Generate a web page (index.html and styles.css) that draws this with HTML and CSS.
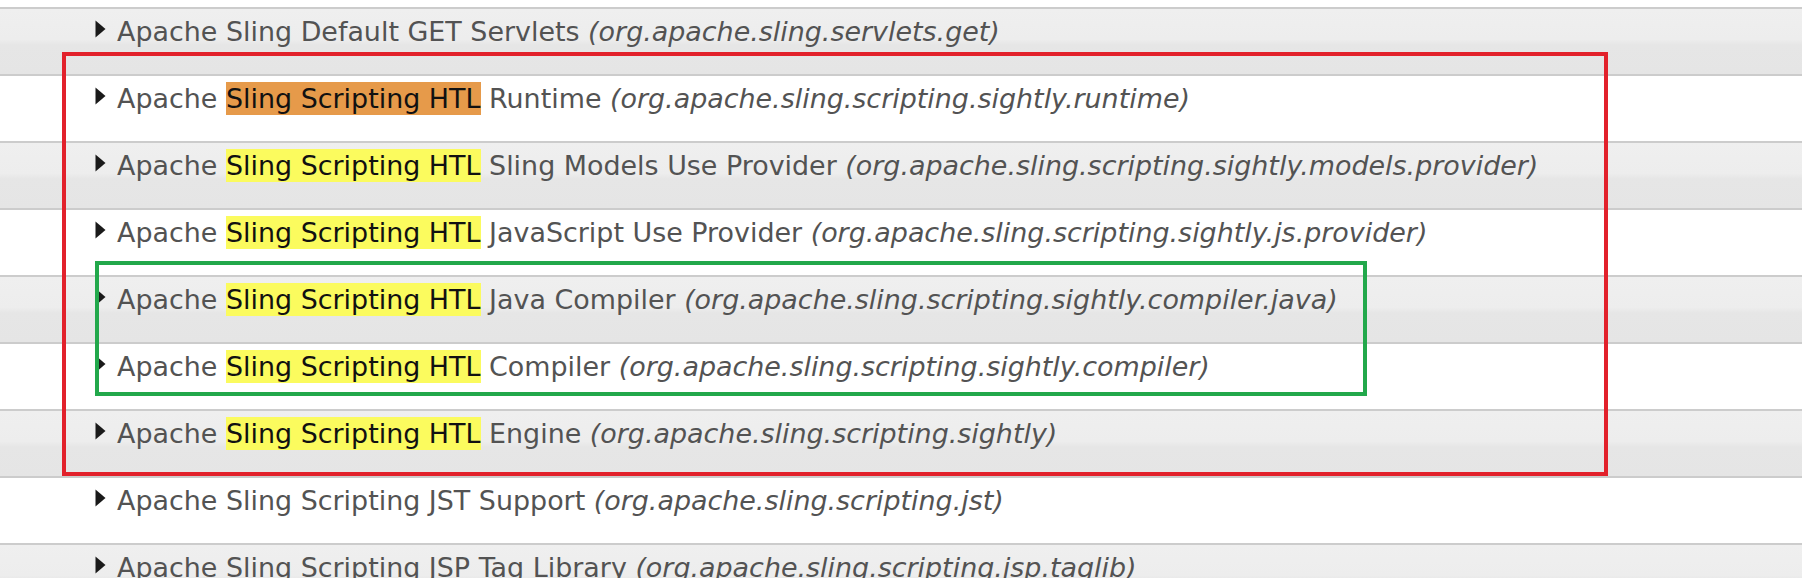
FILE: index.html
```html
<!DOCTYPE html>
<html>
<head>
<meta charset="utf-8">
<link rel="stylesheet" href="styles.css">
</head>
<body>
<div class="page">
  <div class="list">
    <div class="row grey"><svg class="tri" viewBox="0 0 11 18"><path d="M0.5 0.5 L10.5 9 L0.5 17.5 Z"/></svg><span class="name">Apache Sling Default GET Servlets <i>(org.apache.sling.servlets.get)</i></span></div>
    <div class="row"><svg class="tri" viewBox="0 0 11 18"><path d="M0.5 0.5 L10.5 9 L0.5 17.5 Z"/></svg><span class="name">Apache <mark class="hl hl-current">Sling Scripting HTL</mark> Runtime <i>(org.apache.sling.scripting.sightly.runtime)</i></span></div>
    <div class="row grey"><svg class="tri" viewBox="0 0 11 18"><path d="M0.5 0.5 L10.5 9 L0.5 17.5 Z"/></svg><span class="name">Apache <mark class="hl">Sling Scripting HTL</mark> Sling Models Use Provider <i>(org.apache.sling.scripting.sightly.models.provider)</i></span></div>
    <div class="row"><svg class="tri" viewBox="0 0 11 18"><path d="M0.5 0.5 L10.5 9 L0.5 17.5 Z"/></svg><span class="name">Apache <mark class="hl">Sling Scripting HTL</mark> JavaScript Use Provider <i>(org.apache.sling.scripting.sightly.js.provider)</i></span></div>
    <div class="row grey"><svg class="tri" viewBox="0 0 11 18"><path d="M0.5 0.5 L10.5 9 L0.5 17.5 Z"/></svg><span class="name">Apache <mark class="hl">Sling Scripting HTL</mark> Java Compiler <i>(org.apache.sling.scripting.sightly.compiler.java)</i></span></div>
    <div class="row"><svg class="tri" viewBox="0 0 11 18"><path d="M0.5 0.5 L10.5 9 L0.5 17.5 Z"/></svg><span class="name">Apache <mark class="hl">Sling Scripting HTL</mark> Compiler <i>(org.apache.sling.scripting.sightly.compiler)</i></span></div>
    <div class="row grey"><svg class="tri" viewBox="0 0 11 18"><path d="M0.5 0.5 L10.5 9 L0.5 17.5 Z"/></svg><span class="name">Apache <mark class="hl">Sling Scripting HTL</mark> Engine <i>(org.apache.sling.scripting.sightly)</i></span></div>
    <div class="row"><svg class="tri" viewBox="0 0 11 18"><path d="M0.5 0.5 L10.5 9 L0.5 17.5 Z"/></svg><span class="name">Apache Sling Scripting JST Support <i>(org.apache.sling.scripting.jst)</i></span></div>
    <div class="row grey"><svg class="tri" viewBox="0 0 11 18"><path d="M0.5 0.5 L10.5 9 L0.5 17.5 Z"/></svg><span class="name">Apache Sling Scripting JSP Tag Library <i>(org.apache.sling.scripting.jsp.taglib)</i></span></div>
  </div>
  <div class="box box-red"></div>
  <div class="box box-green"></div>
</div>
</body>
</html>
```

FILE: styles.css
```css
html, body {
  margin: 0;
  padding: 0;
  background: #ffffff;
  overflow: hidden;
}

.page {
  position: relative;
  width: 1802px;
  height: 578px;
  overflow: hidden;
  padding-top: 7px;
  box-sizing: border-box;
  font-family: "DejaVu Sans", Verdana, sans-serif;
  font-size: 26.92px;
  color: #535353;
}

.list {
  display: flex;
  flex-direction: column;
}

.row {
  display: flex;
  align-items: flex-start;
  height: 59px;
  border-top: 2px solid #cccccc;
  padding-left: 95px;
  padding-top: 6px;
  box-sizing: content-box;
  background: #ffffff;
}

.row.grey {
  background: linear-gradient(to bottom, #efefef 0%, #ededed 47%, #e6e6e6 55%, #e5e5e5 100%);
}

.tri {
  width: 11px;
  height: 18px;
  margin-top: 5px;
  margin-right: 11px;
  flex: none;
  fill: #1a1a1a;
}

.name {
  line-height: 33px;
  white-space: nowrap;
}

.name i {
  font-style: italic;
}

.hl {
  color: #111111;
  padding: 1px 0 1px;
}

.hl-current {
  background: #e69a4a;
}

.hl:not(.hl-current) {
  background: #fbfb5e;
}

.box {
  position: absolute;
  box-sizing: border-box;
  border-style: solid;
  border-width: 4px;
  pointer-events: none;
}

.box-red {
  left: 62px;
  top: 52px;
  width: 1546px;
  height: 424px;
  border-color: #e2212b;
}

.box-green {
  left: 95px;
  top: 261px;
  width: 1272px;
  height: 135px;
  border-color: #22a84b;
}
```
